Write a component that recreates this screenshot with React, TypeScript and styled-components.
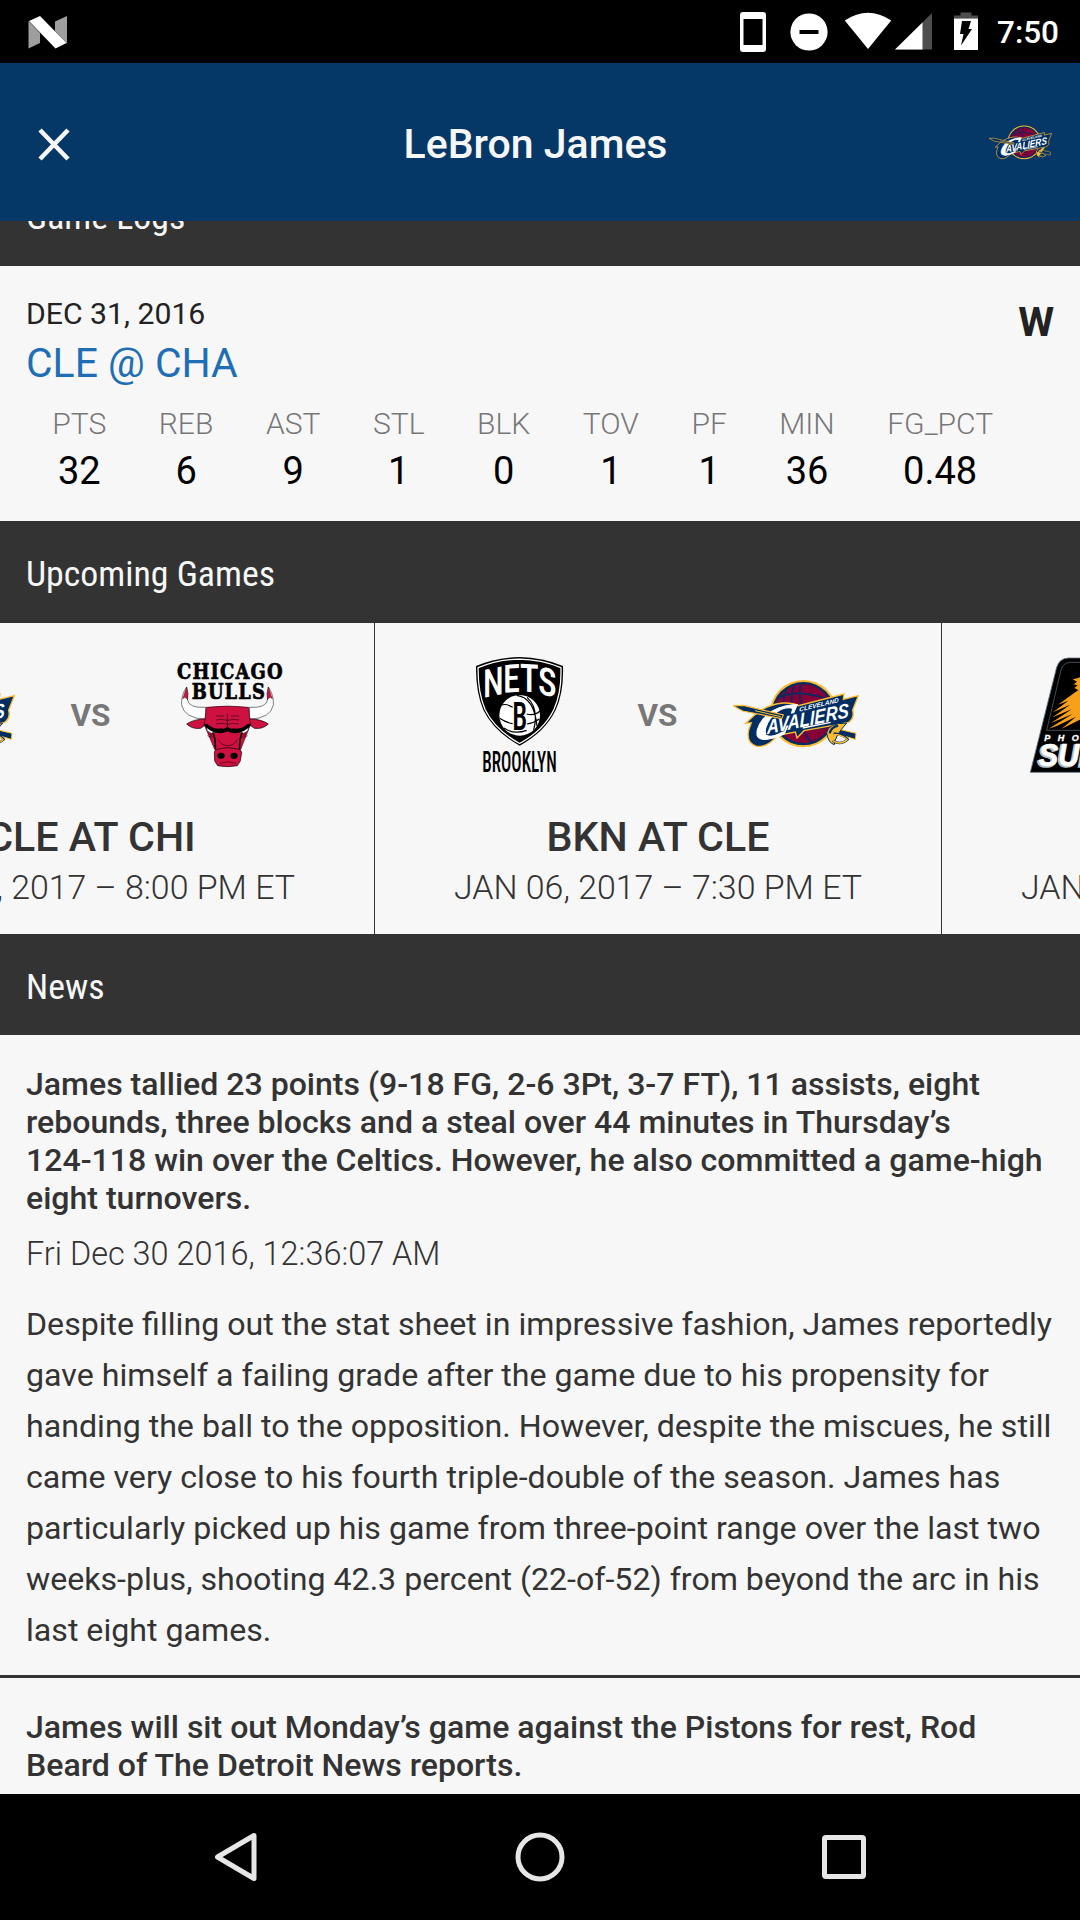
import React from "react";
import styled, { createGlobalStyle } from "styled-components";

const GlobalStyle = createGlobalStyle`
  *, *::before, *::after { box-sizing: border-box; }
  html, body { margin: 0; padding: 0; background: #000; }
  body {
    font-family: Roboto, "Noto Sans", sans-serif;
    -webkit-font-smoothing: antialiased;
  }
`;

const Screen = styled.div`
  width: 1080px;
  height: 1920px;
  display: flex;
  flex-direction: column;
  overflow: hidden;
  background: #f7f7f7;
`;

const StatusBar = styled.div`
  flex: none;
  height: 63px;
  display: flex;
  justify-content: space-between;
  background: #000;
`;

const StatusGroup = styled.div`
  display: flex;
  height: 63px;
`;

const Clock = styled.span`
  width: 84px;
  padding-left: 1px;
  font-size: 31.5px;
  font-weight: 500;
  line-height: 65px;
  color: #fff;
`;

const Header = styled.header`
  flex: none;
  height: 158px;
  display: grid;
  grid-template-columns: 100px 1fr 100px;
  align-items: center;
  background: #063867;
  color: #f7f7f7;
`;

const CloseButton = styled.button`
  height: 100px;
  padding: 5px 0 0 38px;
  border: 0;
  background: none;
  text-align: left;
  line-height: 0;
`;

const HeaderTitle = styled.h1`
  margin: 0 0 0 -9px;
  padding-top: 3px;
  font-size: 41px;
  font-weight: 500;
  line-height: 50px;
  text-align: center;
`;

const HeaderLogo = styled.div`
  padding-left: 9px;
  line-height: 0;
`;

const Body = styled.main`
  flex: 1;
  min-height: 0;
  display: flex;
  flex-direction: column;
  justify-content: flex-start;
  overflow: hidden;
`;

const SectionBar = styled.h2<{ $clipped?: boolean; $height?: number }>`
  flex: none;
  height: ${(p) => p.$height ?? 102}px;
  margin: ${(p) => (p.$clipped ? "-57px" : "0")} 0 0;
  padding: 0 26px;
  font-family: "Roboto Condensed", Roboto, sans-serif;
  font-size: 35.8px;
  font-weight: 400;
  line-height: 106px;
  background: #333;
  color: #f7f7f7;
`;

const LogCard = styled.section`
  flex: none;
  height: 255px;
  padding: 30px 26px 0;
`;

const LogHead = styled.div`
  display: flex;
  justify-content: space-between;
`;

const LogDate = styled.div`
  font-size: 30.2px;
  line-height: 36px;
  color: #222;
`;

const LogMatch = styled.div`
  margin-top: 6px;
  font-size: 40.9px;
  line-height: 50px;
  color: #1e6eb6;
`;

const LogResult = styled.div`
  padding-top: 1px;
  font-size: 41px;
  font-weight: 700;
  line-height: 50px;
  color: #222;
`;

const StatRow = styled.div`
  display: flex;
  margin-top: 18px;
`;

const Stat = styled.div`
  padding: 0 26.25px;
  text-align: center;
`;

const StatLabel = styled.div`
  font-size: 30.05px;
  font-weight: 300;
  line-height: 36px;
  color: #777;
`;

const StatValue = styled.div`
  margin-top: 6px;
  font-size: 38px;
  line-height: 46px;
  color: #000;
`;

const GameStrip = styled.section`
  flex: none;
  display: flex;
  height: 311px;
  margin-left: -192px;
`;

const GameCard = styled.article`
  flex: none;
  width: 567px;
  padding-top: 28px;
  border-right: 1px solid #333;
  text-align: center;
`;

const GameLogos = styled.div`
  display: grid;
  grid-template-columns: 126px 151px 126px;
  margin-left: 81px;
  height: 126px;
  align-items: center;
  line-height: 0;
`;

const Versus = styled.span`
  font-size: 31.5px;
  font-weight: 700;
  line-height: 38px;
  padding-top: 4px;
  color: #777;
`;

const GameTitle = styled.h3`
  margin: 35px 0 0;
  font-size: 41.2px;
  font-weight: 500;
  line-height: 50px;
  color: #333;
`;

const GameTime = styled.div`
  margin-top: 6px;
  font-size: 33.9px;
  font-weight: 300;
  line-height: 40px;
  color: #333;
`;

const NewsItem = styled.article`
  flex: none;
  padding: 30px 20px 19px 26px;
  border-bottom: 3px solid #333;
  color: #333;
`;

const NewsTitle = styled.h3`
  margin: 0;
  font-size: 32.05px;
  font-weight: 500;
  line-height: 38px;
  white-space: pre;
`;

const NewsDate = styled.div`
  margin-top: 19px;
  font-size: 32.45px;
  font-weight: 300;
  line-height: 37px;
`;

const NewsText = styled.p`
  margin: 26px 0 0;
  font-size: 32.15px;
  line-height: 51px;
  white-space: pre;
`;

const NavBar = styled.nav`
  flex: none;
  height: 126px;
  display: flex;
  justify-content: center;
  gap: 178px;
  background: #000;
`;

const NavButton = styled.button`
  width: 126px;
  height: 126px;
  padding: 0;
  border: 0;
  background: none;
  line-height: 0;
`;

const CONDENSED = '"Roboto Condensed", Roboto, sans-serif';

function AndroidNIcon() {
  return (
    <svg width="100" height="63" viewBox="0 0 100 63">
      <path d="M28.500 21 40 33v10l-11.500 5.500z" fill="#9e9e9e" />
      <path d="M55 21.500 67 16v27.500L55 31z" fill="#9e9e9e" />
      <path d="M29 21 40 16 66.500 43 55.500 48.500z" fill="#fff" />
    </svg>
  );
}

function StatusIcons() {
  return (
    <svg width="276" height="63" viewBox="0 0 276 63">
      <path fillRule="evenodd" fill="#fff" d="M23 12h20a3 3 0 0 1 3 3v34a3 3 0 0 1-3 3H23a3 3 0 0 1-3-3V15a3 3 0 0 1 3-3zM23.500 19v26h19V19z" />
      <circle cx="89" cy="32" r="18.600" fill="#fff" />
      <rect x="79.500" y="30" width="19" height="4" fill="#000" />
      <path d="M124.800 20.500Q148 5 171.200 20.500L148 49z" fill="#fff" />
      <path d="M212 13v36.500h-37z" fill="#4d4d4d" />
      <path d="M202.500 22.500V49.500H175z" fill="#fff" />
      <path d="M234 18.500v-3h6.500v-3h11v3h6.500v3z" fill="#4d4d4d" />
      <path d="M234 18.500h24V50h-24z" fill="#fff" />
      <path d="M242 21h9l-2.500 8h3.500L241 45.500 243.500 34H240z" fill="#000" />
    </svg>
  );
}

function CavaliersLogo({ size }: { size: number }) {
  return (
    <svg width={size} height={size} viewBox="99 33 378 378">
      <circle cx="310" cy="221" r="101" fill="#fdbb30" />
      <circle cx="310" cy="221" r="95" fill="#002d62" />
      <circle cx="310" cy="221" r="88" fill="#860038" />
      <g fill="none" stroke="#002d62" strokeWidth="5">
        <path d="M302 132Q296 165 304 200M283 135Q270 165 276 200M262 145Q250 165 250 195M236 172Q300 145 388 180" />
        <path d="M305 260Q315 290 335 305M240 285Q290 270 380 262" />
      </g>
      <path
        d="M137 250 163 226Q200 193 250 189Q280 188 295 197L432 162 430 178 475 167 458 210Q464 235 446 247L400 256 312 272 291 294 286 276 232 286Q205 322 170 319Q138 310 146 270L154 248z"
        fill="#002d62"
        stroke="#fdbb30"
        strokeWidth="4"
      />
      <g fill="#fff" fontWeight="700" fontStyle="italic">
        <text transform="matrix(.97 -.2 -.28 1 157 306)" fontFamily="Liberation Serif, serif" fontSize="141" textLength="112" lengthAdjust="spacingAndGlyphs" stroke="#fff" strokeWidth="3">C</text>
        <text transform="matrix(.96 -.2 .02 1 201 283)" fontFamily="Liberation Sans, sans-serif" fontSize="61" textLength="256" lengthAdjust="spacingAndGlyphs" stroke="#002d62" strokeWidth="3" paintOrder="stroke">AVALIERS</text>
        <text transform="matrix(.96 -.23 0 1 298 215)" fontFamily="Liberation Sans, sans-serif" fontSize="19" textLength="123" lengthAdjust="spacingAndGlyphs">CLEVELAND</text>
      </g>
      <path d="M308 264 392 247" stroke="#fff" strokeWidth="4" />
      <path d="M99 197 130 196 250 225 245 236 128 213z" fill="#002d62" stroke="#fdbb30" strokeWidth="3.500" />
      <path d="M165 212 242 230" stroke="#fdbb30" strokeWidth="3" />
      <path d="M392 262 468 280 466 298 390 276z" fill="#002d62" stroke="#fdbb30" strokeWidth="3" />
      <path d="M440 249Q385 249 380 278Q384 309 403 314Q404 289 440 249z" fill="#fdbb30" stroke="#002d62" strokeWidth="3" />
      <path d="M398 302Q422 318 443 298Q430 283 401 280M389 280Q392 263 414 257" fill="none" stroke="#002d62" strokeWidth="7" />
      <path d="M398 302Q422 318 443 298M402 283Q424 283 440 297" fill="none" stroke="#fdbb30" strokeWidth="4" />
    </svg>
  );
}

function BullHalf() {
  return (
    <>
      <path d="M80 126Q63 150 65 180Q72 219 136 223L137 187Q84 190 82 162Q86 145 80 126z" fill="#fff" stroke="#000" strokeWidth="1.500" />
      <path d="M80 126 68 161 75 157 83 164Q86 145 80 126z" fill="#ce1141" stroke="#000" strokeWidth="1" />
      <path d="M137 221Q100 223 80 237Q96 253 122 250L136 240z" fill="#ce1141" stroke="#000" strokeWidth="2" />
    </>
  );
}

function BullFace() {
  return (
    <>
      <path d="M139 246 168 262 154 265 142 258z" fill="#fff" stroke="#000" strokeWidth="1.500" />
      <path d="M132 236Q142 235 150 243Q165 254 185 250Q195 254 203 243V259Q192 266 176 264Q150 262 131 239z" fill="#000" />
      <path d="M160 260Q171 285 168 313L164 311Q165 283 156 264z" fill="#000" />
      <path d="M168 213H192M168 225Q185 221 201 226M168 237Q187 233 203 238M142 272Q150 278 158 276M145 266Q150 272 156 270" fill="none" stroke="#000" strokeWidth="1.500" />
      <ellipse cx="183" cy="332" rx="11" ry="9" fill="#000" />
    </>
  );
}

function BullsLogo({ size }: { size: number }) {
  return (
    <svg width={size} height={size} viewBox="18 18 378 378">
      <g fill="#000" stroke="#000" strokeWidth="2" fontFamily="DejaVu Serif, serif" fontWeight="700" fontSize="64" letterSpacing="4">
        <text x="51" y="101" textLength="320" lengthAdjust="spacingAndGlyphs">CHICAGO</text>
        <text x="95" y="163" textLength="223" lengthAdjust="spacingAndGlyphs">BULLS</text>
      </g>
      <BullHalf />
      <g transform="matrix(-1 0 0 1 405 0)"><BullHalf /></g>
      <path d="M139 187Q202 179 266 187L271 240 241 316H165L133 240z" fill="#ce1141" stroke="#000" strokeWidth="1.500" />
      <path d="M163 322Q164 313 180 311Q203 305 226 311Q243 313 245 322L241 348 232 362Q203 368 173 362L164 348z" fill="#ce1141" stroke="#000" strokeWidth="2" />
      <BullFace />
      <g transform="matrix(-1 0 0 1 405 0)"><BullFace /></g>
      <path d="M202 206V252M175 284Q184 302 203 302Q223 302 231 284M178 355Q203 346 228 355" fill="none" stroke="#000" strokeWidth="1.500" />
    </svg>
  );
}

function NetsLogo({ size }: { size: number }) {
  const shield = "M288 138Q350 112 419 111Q488 112 549 138Q552 215 527 270Q496 335 419 377Q342 335 310 270Q287 215 288 138z";
  return (
    <svg width={size} height={size} viewBox="228 93 378 378">
      <path d={shield} fill="#000" />
      <path d={shield} fill="none" stroke="#fff" strokeWidth="4" transform="translate(419 243) scale(.952) translate(-419 -243)" />
      <circle cx="419" cy="286" r="61" fill="#fff" />
      <g fill="none" stroke="#000" strokeWidth="3.500">
        <path d="M364 255Q380 250 398 262M359 295Q376 307 398 311M440 282Q462 289 480 273M441 312Q462 309 478 297M410 226Q462 232 471 318M441 232Q478 265 461 330M372 324Q402 345 440 331" />
      </g>
      <g fontFamily={CONDENSED} fill="#000">
        <text x="397" y="329" fontSize="118" fontWeight="500" textLength="45" lengthAdjust="spacingAndGlyphs" stroke="#fff" strokeWidth="5" paintOrder="stroke">B</text>
        <text x="307" y="455" fontSize="89" fontWeight="500" textLength="223" lengthAdjust="spacingAndGlyphs">BROOKLYN</text>
      </g>
      <g fontFamily={CONDENSED} fill="#fff" fontWeight="500">
        <text transform="matrix(1 -.2 0 1 309 234)" fontSize="117" textLength="62" lengthAdjust="spacingAndGlyphs">N</text>
        <text transform="matrix(1 -.06 0 1 369 218)" fontSize="117" textLength="51" lengthAdjust="spacingAndGlyphs">E</text>
        <text transform="matrix(1 .06 0 1 419 214)" fontSize="116" textLength="57" lengthAdjust="spacingAndGlyphs">T</text>
        <text transform="matrix(1 .2 0 1 474 221)" fontSize="116" textLength="56" lengthAdjust="spacingAndGlyphs">S</text>
      </g>
    </svg>
  );
}

function SunsLogo({ size }: { size: number }) {
  return (
    <svg width={size} height={size} viewBox="969 33 378 378">
      <path d="M991 397 1070 82Q1078 55 1105 54H1215Q1242 55 1250 82L1329 397z" fill="#000" stroke="#63727d" strokeWidth="2.500" />
      <path d="M1040 271 1083 90Q1088 69 1110 67H1210Q1232 69 1237 90L1280 271z" fill="none" stroke="#63727d" strokeWidth="2" />
      <path
        d="M1160 105 1134 114 1118 118 1131 125 1121 133 1133 136 1123 144 1135 150 1110 168 1074 194 1105 182 1059 217 1110 194 1058 232 1115 208 1053 249 1118 222 1046 266 1070 258 1128 230 1085 266 1138 240 1180 230z"
        fill="#f9a01b"
      />
      <text x="1033" y="303" fill="#fff" fontFamily="Liberation Sans, sans-serif" fontWeight="700" fontStyle="italic" fontSize="27" stroke="#fff" strokeWidth="1" textLength="256" lengthAdjust="spacing">PHOENIX</text>
      <g fontFamily="Liberation Sans, sans-serif" fontWeight="700" fontStyle="italic" fontSize="93">
        <text x="1012" y="381" fill="#b5b8bb" stroke="#b5b8bb" strokeWidth="5" textLength="244" lengthAdjust="spacingAndGlyphs">SUNS</text>
        <text x="1016" y="378" fill="#fff" stroke="#fff" strokeWidth="2" textLength="244" lengthAdjust="spacingAndGlyphs">SUNS</text>
      </g>
    </svg>
  );
}

const stats: [string, string][] = [
  ["PTS", "32"],
  ["REB", "6"],
  ["AST", "9"],
  ["STL", "1"],
  ["BLK", "0"],
  ["TOV", "1"],
  ["PF", "1"],
  ["MIN", "36"],
  ["FG_PCT", "0.48"],
];

type Logo = React.ComponentType<{ size: number }>;

const games: { away: Logo; home: Logo; title: string; time: string }[] = [
  { away: CavaliersLogo, home: BullsLogo, title: "CLE AT CHI", time: "JAN 04, 2017 – 8:00 PM ET" },
  { away: NetsLogo, home: CavaliersLogo, title: "BKN AT CLE", time: "JAN 06, 2017 – 7:30 PM ET" },
  { away: SunsLogo, home: CavaliersLogo, title: "PHX AT CLE", time: "JAN 08, 2017 – 6:00 PM ET" },
];

const news = [
  {
    title:
      "James tallied 23 points (9-18 FG, 2-6 3Pt, 3-7 FT), 11 assists, eight\nrebounds, three blocks and a steal over 44 minutes in Thursday’s\n124-118 win over the Celtics. However, he also committed a game-high\neight turnovers.",
    date: "Fri Dec 30 2016, 12:36:07 AM",
    text:
      "Despite filling out the stat sheet in impressive fashion, James reportedly\ngave himself a failing grade after the game due to his propensity for\nhanding the ball to the opposition. However, despite the miscues, he still\ncame very close to his fourth triple-double of the season. James has\nparticularly picked up his game from three-point range over the last two\nweeks-plus, shooting 42.3 percent (22-of-52) from beyond the arc in his\nlast eight games.",
  },
  {
    title: "James will sit out Monday’s game against the Pistons for rest, Rod\nBeard of The Detroit News reports.",
  },
];

export default function App() {
  return (
    <>
      <GlobalStyle />
      <Screen>
        <StatusBar>
          <AndroidNIcon />
          <StatusGroup>
            <StatusIcons />
            <Clock>7:50</Clock>
          </StatusGroup>
        </StatusBar>
        <Header>
          <CloseButton aria-label="Close">
            <svg width="32" height="33" viewBox="0 0 32 33">
              <path d="M2 2 30 31M30 2 2 31" stroke="#f7f7f7" strokeWidth="4.500" />
            </svg>
          </CloseButton>
          <HeaderTitle>LeBron James</HeaderTitle>
          <HeaderLogo>
            <CavaliersLogo size={63} />
          </HeaderLogo>
        </Header>
        <Body>
          <SectionBar $clipped>Game Logs</SectionBar>
          <LogCard>
            <LogHead>
              <div>
                <LogDate>DEC 31, 2016</LogDate>
                <LogMatch>CLE @ CHA</LogMatch>
              </div>
              <LogResult>W</LogResult>
            </LogHead>
            <StatRow>
              {stats.map(([label, value]) => (
                <Stat key={label}>
                  <StatLabel>{label}</StatLabel>
                  <StatValue>{value}</StatValue>
                </Stat>
              ))}
            </StatRow>
          </LogCard>
          <SectionBar>Upcoming Games</SectionBar>
          <GameStrip>
            {games.map(({ away: Away, home: Home, title, time }) => (
              <GameCard key={title}>
                <GameLogos>
                  <Away size={126} />
                  <Versus>VS</Versus>
                  <Home size={126} />
                </GameLogos>
                <GameTitle>{title}</GameTitle>
                <GameTime>{time}</GameTime>
              </GameCard>
            ))}
          </GameStrip>
          <SectionBar $height={101}>News</SectionBar>
          {news.map((item) => (
            <NewsItem key={item.title}>
              <NewsTitle>{item.title}</NewsTitle>
              {item.date && <NewsDate>{item.date}</NewsDate>}
              {item.text && <NewsText>{item.text}</NewsText>}
            </NewsItem>
          ))}
        </Body>
        <NavBar>
          <NavButton aria-label="Back">
            <svg width="126" height="126" viewBox="0 0 126 126">
              <path d="M81 41.500V84.500L44.500 63z" fill="none" stroke="#e6e6e6" strokeWidth="5" strokeLinejoin="round" />
            </svg>
          </NavButton>
          <NavButton aria-label="Home">
            <svg width="126" height="126" viewBox="0 0 126 126">
              <circle cx="63" cy="63" r="22" fill="none" stroke="#e6e6e6" strokeWidth="5" />
            </svg>
          </NavButton>
          <NavButton aria-label="Recent apps">
            <svg width="126" height="126" viewBox="0 0 126 126">
              <rect x="43.500" y="43.500" width="39" height="39" rx="1.500" fill="none" stroke="#e6e6e6" strokeWidth="5" />
            </svg>
          </NavButton>
        </NavBar>
      </Screen>
    </>
  );
}
